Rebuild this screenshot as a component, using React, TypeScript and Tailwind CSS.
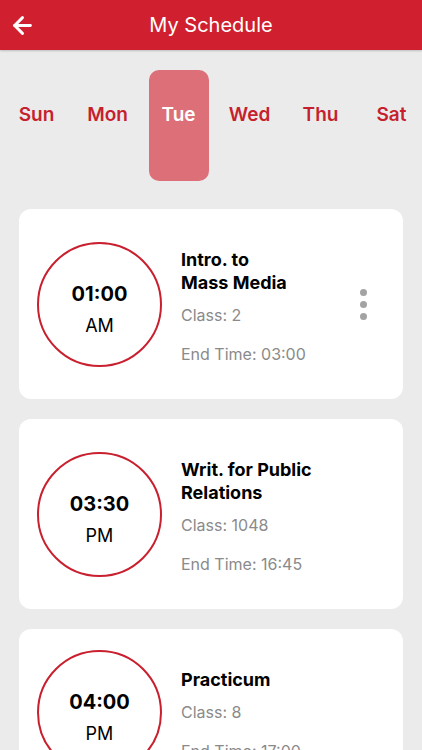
import { ArrowLeft } from "lucide-react";

const days = ["Sun", "Mon", "Tue", "Wed", "Thu", "Sat"];

type Lesson = { time: string; period: string; title: string[]; room: string; end: string; menu?: boolean };

const lessons: Lesson[] = [
  { time: "01:00", period: "AM", title: ["Intro. to", "Mass Media"], room: "2", end: "03:00", menu: true },
  { time: "03:30", period: "PM", title: ["Writ. for Public", "Relations"], room: "1048", end: "16:45" },
  { time: "04:00", period: "PM", title: ["Practicum"], room: "8", end: "17:00" },
];

function LessonCard({ lesson }: { lesson: Lesson }) {
  return (
    <div className="mx-[19px] shrink-0 rounded-[12px] bg-white flex items-stretch">
      <div className="flex items-center pl-[18px]">
        <div className="w-[125px] h-[125px] rounded-full border-2 border-[#c9202f] flex flex-col items-center justify-center">
          <span className="text-[20px] leading-[24px] font-bold text-black mt-[10px]">{lesson.time}</span>
          <span className="text-[18px] leading-[22px] text-black mt-[9px]">{lesson.period}</span>
        </div>
      </div>
      <div className="flex-1 flex flex-col pl-[19px] pt-[39px] pb-[35px]">
        {lesson.title.map((t) => (
          <span key={t} className="text-[18px] leading-[23px] font-bold text-black">{t}</span>
        ))}
        <span className="text-[16px] leading-[20px] text-[#8a8a8a] mt-[11px]">Class: {lesson.room}</span>
        <span className="text-[16px] leading-[20px] text-[#8a8a8a] mt-[19px]">End Time: {lesson.end}</span>
      </div>
      {lesson.menu && (
        <div className="flex flex-col justify-center gap-[5px] pr-[36px]">
          <span className="w-[7px] h-[7px] rounded-full bg-[#a3a3a3]" />
          <span className="w-[7px] h-[7px] rounded-full bg-[#a3a3a3]" />
          <span className="w-[7px] h-[7px] rounded-full bg-[#a3a3a3]" />
        </div>
      )}
    </div>
  );
}

export default function App() {
  return (
    <div className="w-[422px] h-[750px] overflow-hidden bg-[#ebebeb] flex flex-col" style={{ fontFamily: "Inter, 'Liberation Sans', sans-serif" }}>
      <header className="h-[50px] shrink-0 bg-[#d01f2f] relative flex items-center justify-center shadow-[0_1px_2px_rgba(0,0,0,0.2)]">
        <ArrowLeft className="absolute left-[9px] top-[12px] w-[27px] h-[27px] text-white" strokeWidth={2.6} />
        <h1 className="text-[20px] text-white">My Schedule</h1>
      </header>

      <div className="flex pl-[1px] pt-[20px] pb-[28px] shrink-0">
        {days.map((d) => (
          <div key={d} className="w-[71px] shrink-0 flex justify-center">
            <div
              className={
                d === "Tue"
                  ? "w-[60px] h-[111px] rounded-[10px] bg-[#dc6f78] flex items-center justify-center text-white"
                  : "w-[60px] h-[111px] flex items-center justify-center text-[#c61f2e]"
              }
            >
              <span className="text-[19px] font-semibold mt-[-20px]">{d}</span>
            </div>
          </div>
        ))}
      </div>

      <div className="flex flex-col gap-[20px]">
        {lessons.map((l) => (
          <LessonCard key={l.time} lesson={l} />
        ))}
      </div>
    </div>
  );
}
